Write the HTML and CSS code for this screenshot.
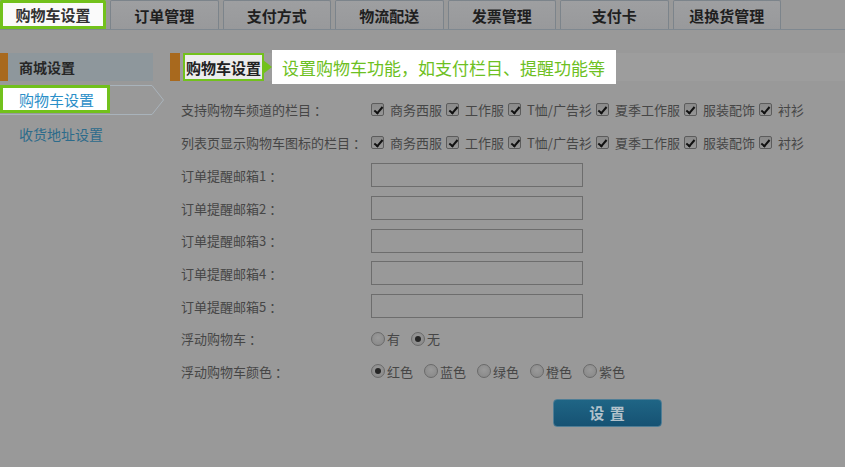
FILE: index.html
```html
<!DOCTYPE html>
<html lang="zh-CN">
<head>
  <meta charset="UTF-8" />
  <title>购物车设置</title>
  <link rel="stylesheet" href="styles.css">
</head>
<body>
  <div class="tabs">
    <a class="tab guide-on">购物车设置</a>
    <a class="tab">订单管理</a>
    <a class="tab">支付方式</a>
    <a class="tab">物流配送</a>
    <a class="tab">发票管理</a>
    <a class="tab">支付卡</a>
    <a class="tab">退换货管理</a>
  </div>

  <div class="layout">
    <aside class="side">
      <div class="side-head">商城设置</div>
      <div class="side-item current">
        <svg class="chev" width="165" height="30" viewBox="0 0 165 30">
          <path d="M0 0.5 H152 L163.5 15 L152 29.5 H0" fill="none" stroke="#a9b3bb" stroke-width="1" />
        </svg>
        <span class="guide-box">购物车设置</span>
      </div>
      <div class="side-item">收货地址设置</div>
    </aside>

    <main class="content">
      <div class="title-bar">
        <span class="title">购物车设置</span>
        <div class="guide-tip">设置购物车功能，如支付栏目、提醒功能等</div>
      </div>

      <form class="form">
        <div class="row">
          <label class="lbl">支持购物车频道的栏目<span class="colon">：</span></label>
          <div class="ctrl">
            <label class="opt"><input type="checkbox" checked>商务西服</label>
            <label class="opt"><input type="checkbox" checked>工作服</label>
            <label class="opt"><input type="checkbox" checked>T恤/广告衫</label>
            <label class="opt"><input type="checkbox" checked>夏季工作服</label>
            <label class="opt"><input type="checkbox" checked>服装配饰</label>
            <label class="opt"><input type="checkbox" checked>衬衫</label>
          </div>
        </div>
        <div class="row">
          <label class="lbl">列表页显示购物车图标的栏目<span class="colon">：</span></label>
          <div class="ctrl">
            <label class="opt"><input type="checkbox" checked>商务西服</label>
            <label class="opt"><input type="checkbox" checked>工作服</label>
            <label class="opt"><input type="checkbox" checked>T恤/广告衫</label>
            <label class="opt"><input type="checkbox" checked>夏季工作服</label>
            <label class="opt"><input type="checkbox" checked>服装配饰</label>
            <label class="opt"><input type="checkbox" checked>衬衫</label>
          </div>
        </div>
        <div class="row">
          <label class="lbl">订单提醒邮箱1<span class="colon">：</span></label>
          <div class="ctrl"><input class="txt" type="text"></div>
        </div>
        <div class="row">
          <label class="lbl">订单提醒邮箱2<span class="colon">：</span></label>
          <div class="ctrl"><input class="txt" type="text"></div>
        </div>
        <div class="row">
          <label class="lbl">订单提醒邮箱3<span class="colon">：</span></label>
          <div class="ctrl"><input class="txt" type="text"></div>
        </div>
        <div class="row">
          <label class="lbl">订单提醒邮箱4<span class="colon">：</span></label>
          <div class="ctrl"><input class="txt" type="text"></div>
        </div>
        <div class="row">
          <label class="lbl">订单提醒邮箱5<span class="colon">：</span></label>
          <div class="ctrl"><input class="txt" type="text"></div>
        </div>
        <div class="row">
          <label class="lbl">浮动购物车<span class="colon">：</span></label>
          <div class="ctrl">
            <label class="rad"><input type="radio" name="float">有</label>
            <label class="rad"><input type="radio" name="float" checked>无</label>
          </div>
        </div>
        <div class="row">
          <label class="lbl">浮动购物车颜色<span class="colon">：</span></label>
          <div class="ctrl">
            <label class="rad"><input type="radio" name="color" checked>红色</label>
            <label class="rad"><input type="radio" name="color">蓝色</label>
            <label class="rad"><input type="radio" name="color">绿色</label>
            <label class="rad"><input type="radio" name="color">橙色</label>
            <label class="rad"><input type="radio" name="color">紫色</label>
          </div>
        </div>
        <div class="actions">
          <button type="button" class="btn">设 置</button>
        </div>
      </form>
    </main>
  </div>
</body>
</html>
```

FILE: styles.css
```css
body {
  margin: 0;
  background: #999;
  font-family: "Noto Sans CJK SC", "Liberation Sans", sans-serif;
  font-size: 13px;
  color: #444;
  width: 845px;
  height: 467px;
  overflow: hidden;
}

/* top tabs */
.tabs { display: flex; gap: 4px; height: 29px; border-bottom: 1px solid #7f8890; }
.tab {
  width: 108.5px; box-sizing: border-box; height: 29px;
  display: flex; align-items: center; justify-content: center;
  background: linear-gradient(#9e9fa1, #98999b);
  border: 1px solid #7c848b; border-bottom: none; border-radius: 2px 2px 0 0;
  font-size: 15px; font-weight: bold; color: #1f1f1f;
}
.tab.guide-on {
  width: 106px; background: #fafafa; border: 3px solid #72c11c; color: #333;
  position: relative; z-index: 2;
}

.layout { display: flex; padding-top: 23px; }

/* sidebar */
.side { width: 153px; flex: none; }
.side-head {
  height: 28px; line-height: 28px; box-sizing: border-box;
  background: #8e979c; border-left: 8px solid #a8691e;
  padding-left: 11px; font-size: 14px; font-weight: bold; color: #262626;
}
.side-item { font-size: 14px; color: #2c6b8b; padding-left: 19px; margin-top: 8px; line-height: 22px; }
.side-item.current { position: relative; padding-left: 0; margin-top: 4px; height: 30px; line-height: normal; }
.chev { position: absolute; left: 0; top: 0; }
.guide-box {
  position: relative; display: flex; align-items: center;
  width: 110px; height: 28px; margin-top: 1px; box-sizing: border-box;
  background: #fff; border: 3px solid #72c11c; padding-left: 16px;
  color: #2b8fc8; font-size: 15px;
}

/* main */
.content { flex: 1; margin-left: 17px; }
.title-bar {
  height: 28px; display: flex; align-items: center;
  background: #9d9d9d; border-left: 10px solid #a8691e;
}
.title {
  height: 28px; box-sizing: border-box; margin-left: 3px;
  display: flex; align-items: center; padding: 0 1px;
  background: #ececec; border: 2px solid #72c11c;
  font-size: 15px; font-weight: bold; color: #222;
}
.guide-tip {
  position: relative; margin-left: 8px;
  height: 34px; display: flex; align-items: center;
  padding: 0 11px 0 10px; background: #fff;
  font-size: 17px; color: #6dc022;
}
.guide-tip::before {
  content: ""; position: absolute; left: -9px; top: 10px;
  border-style: solid; border-width: 7px 0 7px 9px;
  border-color: transparent transparent transparent #72c11c;
}

.form { padding-top: 12.6px; }
.row { display: grid; grid-template-columns: 201px 1fr; align-items: center; height: 32.7px; }
.lbl { padding-left: 11px; color: #464646; white-space: nowrap; }
.colon { display: inline-block; width: 13px; padding-left: 3px; }
.ctrl { display: flex; align-items: center; }

.opt { display: flex; align-items: center; margin-right: 4px; color: #464646; }
.opt input {
  appearance: none; margin: 0 6px 0 0; width: 13px; height: 13px; position: relative;
  border: 1px solid #5c5c5c; border-radius: 2px; box-sizing: border-box;
  background: linear-gradient(#8a8a8a, #969696);
}
.opt input:checked::after {
  content: ""; position: absolute; left: 3.5px; top: 0.5px; width: 3px; height: 7px;
  border: solid #111; border-width: 0 2px 2px 0; transform: rotate(40deg);
}

.txt {
  width: 212px; height: 24px; box-sizing: border-box; margin: 0;
  border: 1px solid #6d6d6d; background: transparent;
}

.rad { display: flex; align-items: center; margin-right: 11px; color: #464646; }
.rad input {
  appearance: none; margin: 0 2px 0 0; width: 14px; height: 14px; position: relative;
  border: 1px solid #6a6a6a; border-radius: 50%; box-sizing: border-box;
  background: radial-gradient(circle at 50% 40%, #9a9a9a, #868686);
}
.rad input:checked::after {
  content: ""; position: absolute; left: 3px; top: 3px; width: 6px; height: 6px;
  border-radius: 50%; background: #262626;
}

.actions { padding: 11px 0 0 383px; }
.btn {
  width: 109px; height: 28px; border: 1px solid #4f7d95; border-radius: 4px;
  background: linear-gradient(#1f6585, #165273);
  font-family: inherit; font-size: 15px; font-weight: bold; color: #b3c2cb;
  letter-spacing: 1px;
}
```
